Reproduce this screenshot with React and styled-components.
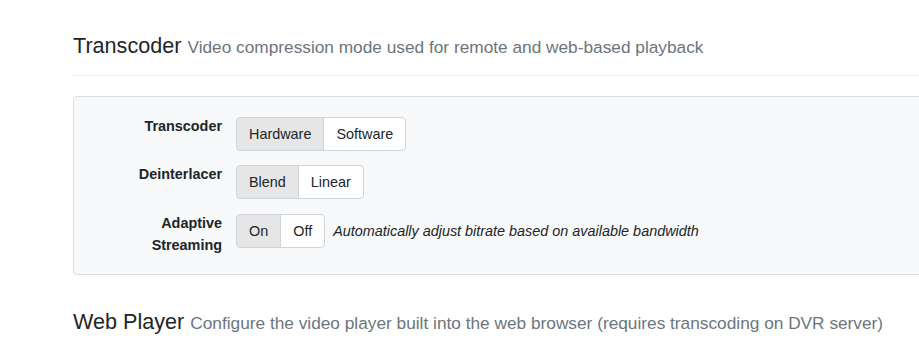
import React, { useState } from "react";
import styled, { createGlobalStyle } from "styled-components";

const Global = createGlobalStyle`
  html, body { margin: 0; padding: 0; background: #fff; overflow: hidden; }
  body { font-family: "Liberation Sans", Arial, sans-serif; color: #212529; }
`;

const Page = styled.div`
  width: 1000px;
  padding: 33px 0 0 73px;
`;

const Section = styled.section`
  margin-bottom: 34px;
`;

const Heading = styled.h4`
  margin: 0;
  font-size: 21.6px;
  font-weight: 400;
  line-height: 1.2;
  color: #212529;
`;

const Small = styled.small`
  font-size: 80%;
  color: #6c757d;
`;

const Rule = styled.hr`
  margin: 16px 0 20px;
  border: 0;
  border-top: 1px solid #e9ecef;
`;

const Panel = styled.div`
  background: #f8f9fa;
  border: 1px solid #dcdee0;
  border-radius: 4px;
  padding: 20px 0 18px 0;
  display: flex;
  flex-direction: column;
  gap: 14.5px;
`;

const Row = styled.div`
  display: flex;
  align-items: flex-start;
  gap: 14px;
`;

const Label = styled.label`
  width: 148px;
  text-align: right;
  font-weight: 700;
  font-size: 14.4px;
  line-height: 21.6px;
  margin-top: -1px;
`;

const Controls = styled.div`
  display: flex;
  align-items: center;
  gap: 8px;
`;

const Group = styled.div`
  display: inline-flex;
`;

const Btn = styled.button`
  font-family: inherit;
  font-size: 14.4px;
  line-height: 20px;
  padding: 6px 12px;
  color: #212529;
  background: ${(p) => (p.$active ? "#e6e6e6" : "#fff")};
  border: 1px solid #ced4da;
  margin: 0;
  cursor: pointer;
  &:first-child { border-radius: 4px 0 0 4px; }
  &:last-child { border-radius: 0 4px 4px 0; margin-left: -1px; }
`;

const Help = styled.em`
  font-size: 14.4px;
  color: #212529;
`;

function Toggle({ options, value, onChange }) {
  return (
    <Group>
      {options.map((o) => (
        <Btn key={o} $active={o === value} onClick={() => onChange(o)}>
          {o}
        </Btn>
      ))}
    </Group>
  );
}

export default function App() {
  const [tc, setTc] = useState("Hardware");
  const [di, setDi] = useState("Blend");
  const [ad, setAd] = useState("On");
  return (
    <Page>
      <Global />
      <Section>
        <Heading>
          Transcoder <Small>Video compression mode used for remote and web-based playback</Small>
        </Heading>
        <Rule />
        <Panel>
          <Row>
            <Label>Transcoder</Label>
            <Controls>
              <Toggle options={["Hardware", "Software"]} value={tc} onChange={setTc} />
            </Controls>
          </Row>
          <Row>
            <Label>Deinterlacer</Label>
            <Controls>
              <Toggle options={["Blend", "Linear"]} value={di} onChange={setDi} />
            </Controls>
          </Row>
          <Row>
            <Label>
              Adaptive
              <br />
              Streaming
            </Label>
            <Controls>
              <Toggle options={["On", "Off"]} value={ad} onChange={setAd} />
              <Help>Automatically adjust bitrate based on available bandwidth</Help>
            </Controls>
          </Row>
        </Panel>
      </Section>
      <Section>
        <Heading>
          Web Player <Small>Configure the video player built into the web browser (requires transcoding on DVR server)</Small>
        </Heading>
      </Section>
    </Page>
  );
}
